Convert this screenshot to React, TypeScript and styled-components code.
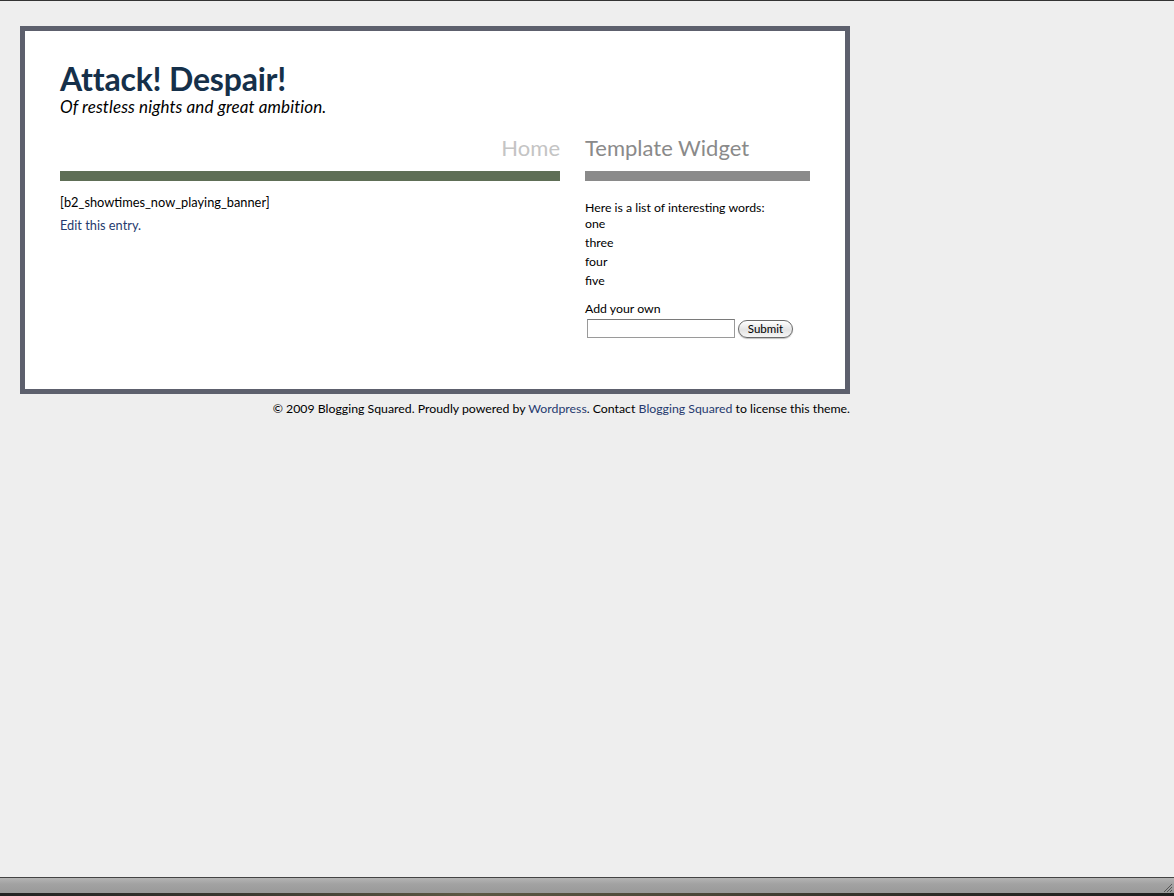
import React from 'react';
import styled, { createGlobalStyle } from 'styled-components';

const GlobalStyle = createGlobalStyle`
  html, body {
    margin: 0;
    padding: 0;
    background: #eeeeee;
  }
  body {
    font-family: 'Lato', 'Liberation Sans', sans-serif;
    color: #000000;
  }
`;

const Page = styled.div`
  display: flex;
  flex-direction: column;
  height: 100vh;
  border-top: 1px solid #333333;
  box-sizing: border-box;
`;

const Wrapper = styled.div`
  width: 830px;
  padding: 25px 0 0 20px;
`;

const Box = styled.div`
  box-sizing: border-box;
  width: 830px;
  background: #ffffff;
  border: 5px solid #5d606d;
  padding: 30px 35px 51px 35px;
`;

const Title = styled.h1`
  margin: 0;
  font-family: 'Lato', 'Liberation Sans', sans-serif;
  font-weight: 700;
  font-size: 32px;
  line-height: 36px;
  color: #15304a;
  letter-spacing: -0.2px;
`;

const Tagline = styled.div`
  font-family: 'Lato', 'Liberation Sans', sans-serif;
  font-style: italic;
  font-size: 17px;
  line-height: 18px;
  color: #000000;
  letter-spacing: 0.1px;
  margin-top: 1px;
`;

const Columns = styled.div`
  display: grid;
  grid-template-columns: 500px 225px;
  column-gap: 25px;
  margin-top: 19px;
`;

const Heading = styled.h2<{ $align: 'left' | 'right'; $color: string }>`
  margin: 0;
  font-family: 'Lato', 'Liberation Sans', sans-serif;
  font-weight: 400;
  font-size: 22px;
  line-height: 26px;
  text-align: ${p => p.$align};
  color: ${p => p.$color};
`;

const Bar = styled.div<{ $color: string }>`
  height: 10px;
  margin-top: 10px;
  background: ${p => p.$color};
`;

const Content = styled.div`
  font-size: 12.8px;
  line-height: 16px;
  padding-top: 13px;
`;

const Para = styled.p`
  margin: 0 0 7px 0;
`;

const EditLink = styled.a`
  color: #263a6e;
  text-decoration: none;
`;

const Sidebar = styled.div`
  font-size: 12.3px;
  line-height: 16px;
  padding-top: 19px;
`;

const WordList = styled.ul`
  list-style: none;
  margin: -2px 0 0 0;
  padding: 0;
`;

const Word = styled.li`
  line-height: 19px;
`;

const AddLabel = styled.div`
  margin-top: 11px;
`;

const Form = styled.form`
  display: flex;
  align-items: center;
  gap: 3px;
  margin: 2px 0 0 2px;
`;

const Input = styled.input`
  box-sizing: border-box;
  width: 148px;
  height: 19px;
  border: 1px solid #9a9a9a;
  border-top-color: #7a7a7a;
  background: #ffffff;
  padding: 0 3px;
  outline: none;
`;

const SubmitBtn = styled.button`
  box-sizing: border-box;
  width: 55px;
  height: 18px;
  border-radius: 9px;
  border: 1px solid #6a6a6a;
  background: linear-gradient(#ffffff, #e4e4e4 55%, #f6f6f6);
  box-shadow: 0 1px 1px rgba(0, 0, 0, 0.25);
  font-family: 'Lato', 'Liberation Sans', sans-serif;
  font-size: 11.5px;
  padding: 0;
  color: #000000;
`;

const Footer = styled.div`
  width: 830px;
  text-align: right;
  font-size: 12.3px;
  line-height: 16px;
  margin-top: 7px;
`;

const FooterLink = styled.a`
  color: #263a6e;
  text-decoration: none;
`;

const Spacer = styled.div`
  flex: 1;
`;

const StatusBar = styled.div`
  height: 15px;
  border-top: 1px solid #444444;
  background: linear-gradient(#b4b4b4, #a2a2a2 40%, #999999);
  display: flex;
  justify-content: flex-end;
  align-items: flex-end;
`;

const Desktop = styled.div`
  height: 3px;
  background: linear-gradient(90deg, #222222, #3a3830 20%, #5c5844 40%, #4a4638 60%, #2c2b26 80%, #1e1e1e);
`;

const Grip = styled.svg`
  display: block;
  margin-right: 1px;
`;

const words = ['one', 'three', 'four', 'five'];

const App: React.FC = () => {
  const [word, setWord] = React.useState('');

  return (
    <>
      <GlobalStyle />
      <Page>
        <Wrapper>
          <Box>
            <Title>Attack! Despair!</Title>
            <Tagline>Of restless nights and great ambition.</Tagline>
            <Columns>
              <div>
                <Heading $align='right' $color='#c4c4c4'>Home</Heading>
                <Bar $color='#5e6e56' />
                <Content>
                  <Para>[b2_showtimes_now_playing_banner]</Para>
                  <EditLink href='#'>Edit this entry.</EditLink>
                </Content>
              </div>
              <div>
                <Heading $align='left' $color='#8a8a8a'>Template Widget</Heading>
                <Bar $color='#8a8a8a' />
                <Sidebar>
                  <div>Here is a list of interesting words:</div>
                  <WordList>
                    {words.map(w => (
                      <Word key={w}>{w}</Word>
                    ))}
                  </WordList>
                  <AddLabel>Add your own</AddLabel>
                  <Form onSubmit={e => e.preventDefault()}>
                    <Input value={word} onChange={e => setWord(e.target.value)} />
                    <SubmitBtn type='submit'>Submit</SubmitBtn>
                  </Form>
                </Sidebar>
              </div>
            </Columns>
          </Box>
          <Footer>
            © 2009 Blogging Squared. Proudly powered by <FooterLink href='#'>Wordpress</FooterLink>. Contact{' '}
            <FooterLink href='#'>Blogging Squared</FooterLink> to license this theme.
          </Footer>
        </Wrapper>
        <Spacer />
        <StatusBar>
          <Grip width='12' height='12' viewBox='0 0 12 12'>
            <path d='M11 3 L3 11 M11 6 L6 11 M11 9 L9 11' stroke='#555' strokeWidth='1' />
          </Grip>
        </StatusBar>
        <Desktop />
      </Page>
    </>
  );
};

export default App;
